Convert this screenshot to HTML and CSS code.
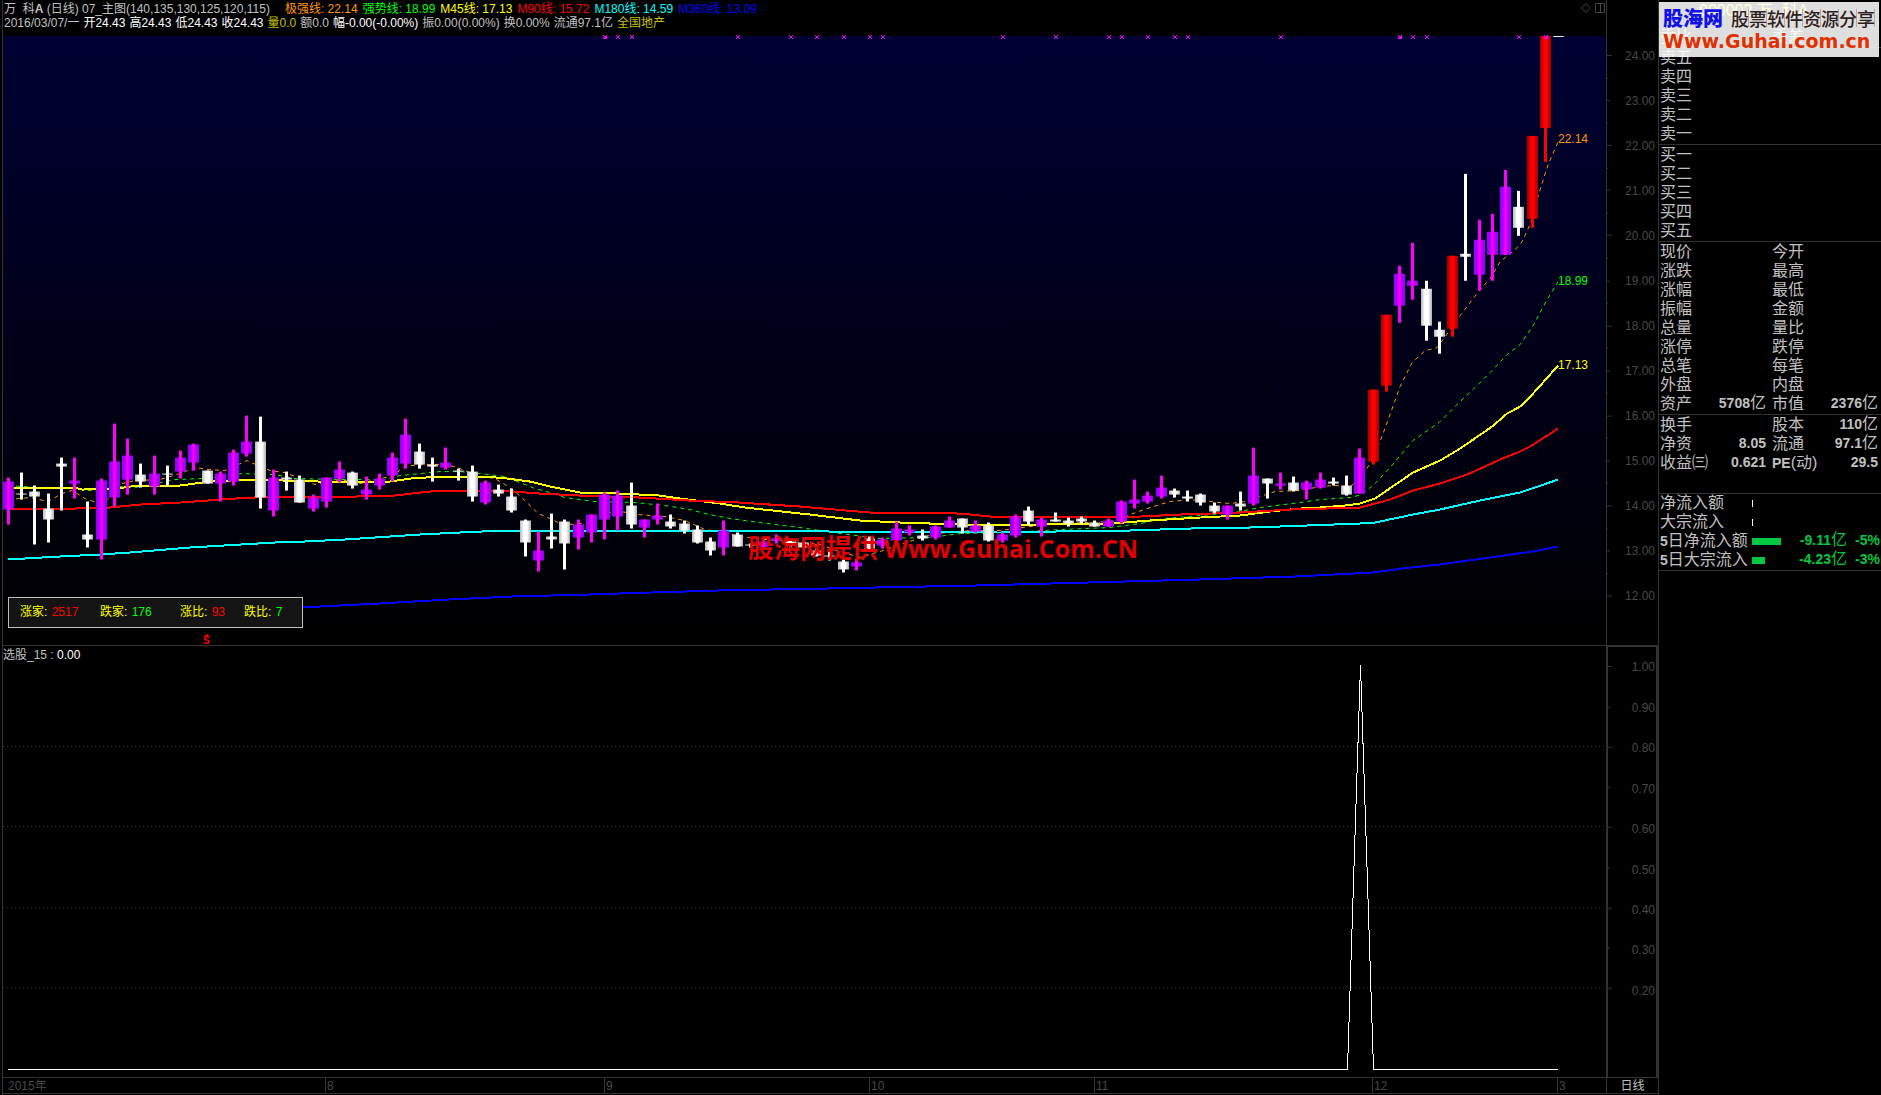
FILE: index.html
```html
<!DOCTYPE html>
<html lang="zh-CN">
<head>
<meta charset="utf-8">
<meta name="viewport" content="width=device-width, initial-scale=1">
<title>万科A 日线</title>
<link rel="stylesheet" href="styles.css">
</head>
<body>
<div class="terminal">
  <main class="charts">
    <section class="panel panel-main">
      <div class="panel-body">
        <header class="info">
          <div class="info-row">
            <span class="info-title">万&nbsp; 科<b>A</b> (日线) 07_主图(140,135,130,125,120,115)</span>
            <span class="orange">极强线: 22.14</span>
            <span class="green">强势线: 18.99</span>
            <span class="yellow">M45线: 17.13</span>
            <span class="red">M90线: 15.72</span>
            <span class="cyan">M180线: 14.59</span>
            <span class="blue">M360线: 13.09</span>
            <svg class="info-icons" width="24" height="12" viewBox="0 0 24 12" aria-hidden="true">
              <path d="M5 1.5 9.5 6 5 10.500.5 6Z"/>
              <path d="M14.500 1.500h9v9h-9zM19.500 1.500v9"/>
            </svg>
          </div>
          <div class="info-row">
            <span>2016/03/07/一</span>
            <span class="white">开24.43</span>
            <span class="white">高24.43</span>
            <span class="white">低24.43</span>
            <span class="white">收24.43</span>
            <span class="olive">量0.0</span>
            <span>额0.0</span>
            <span class="white">幅-0.00(-0.00%)</span>
            <span>振0.00(0.00%)</span>
            <span>换0.00%</span>
            <span>流通97.1亿</span>
            <span class="olive">全国地产</span>
          </div>
        </header>
        <div class="plot">
          <svg id="candles" class="drawing" viewBox="3 36 1603 610" preserveAspectRatio="none" role="img" aria-label="日线K线图">
            <defs>
              <linearGradient id="up"><stop offset="0" stop-color="#9000ff"/><stop offset=".25" stop-color="#a800ff"/><stop offset=".5" stop-color="#ff00ff"/><stop offset=".75" stop-color="#b000ff"/><stop offset="1" stop-color="#9000ff"/></linearGradient>
              <linearGradient id="down"><stop offset="0" stop-color="#b8b8b8"/><stop offset=".35" stop-color="#ffffff"/><stop offset=".65" stop-color="#ffffff"/><stop offset="1" stop-color="#b0b0b0"/></linearGradient>
              <linearGradient id="limit"><stop offset="0" stop-color="#a00000"/><stop offset=".4" stop-color="#ff0000"/><stop offset=".6" stop-color="#ff0000"/><stop offset="1" stop-color="#a00000"/></linearGradient>
            </defs>
          </svg>
          <span class="price price-1 orange">22.14</span>
          <span class="price price-2 green">18.99</span>
          <span class="price price-3 yellow">17.13</span>
          <p class="watermark">股海网提供 <span>Www.Guhai.Com.CN</span></p>
          <div class="breadth">
            <span class="yellow">涨家: <i class="red">2517</i></span>
            <span class="yellow">跌家: <i class="green">176</i></span>
            <span class="yellow">涨比: <i class="red">93</i></span>
            <span class="yellow">跌比: <i class="green">7</i></span>
          </div>
          <span class="signal red">S</span>
        </div>
      </div>
      <div class="axis axis-main">
        <svg class="ticks" viewBox="0 0 8 646" preserveAspectRatio="none" id="ticks-main" aria-hidden="true"></svg>
        <ol class="labels">
          <li>24.00</li><li>23.00</li><li>22.00</li><li>21.00</li><li>20.00</li><li>19.00</li><li>18.00</li><li>17.00</li><li>16.00</li><li>15.00</li><li>14.00</li><li>13.00</li><li>12.00</li>
        </ol>
      </div>
    </section>
    <section class="panel panel-sub">
      <div class="panel-body">
        <h2 class="sub-title">选股_15 : <span class="white">0.00</span></h2>
        <svg class="drawing" viewBox="3 647 1603 430" preserveAspectRatio="none" role="img" aria-label="选股信号">
          <path class="grid" d="M3 747.5H1606M3 827.5H1606M3 908.5H1606M3 988.5H1606"/>
          <path class="pick" d="M8 1069.5H1347.5L1360.500 666 1373.500 1069.500H1558"/>
        </svg>
      </div>
      <div class="axis axis-sub">
        <svg class="ticks" viewBox="0 0 8 430" preserveAspectRatio="none" aria-hidden="true">
          <path d="M0 19.5h4M0 60.500h2M0 100.500h4M0 140.500h2M0 180.500h4M0 221.500h2M0 261.500h4M0 301.500h2M0 341.500h4"/>
        </svg>
        <ol class="labels">
          <li>1.00</li><li>0.90</li><li>0.80</li><li>0.70</li><li>0.60</li><li>0.50</li><li>0.40</li><li>0.30</li><li>0.20</li>
        </ol>
      </div>
    </section>
    <footer class="dates">
      <ol class="months">
        <li>2015年</li><li>8</li><li>9</li><li>10</li><li>11</li><li>12</li><li>3</li>
      </ol>
      <span class="period">日线</span>
    </footer>
  </main>

  <aside class="quote">
    <div class="quote-name">000002 万&nbsp; 科A</div>
    <table class="group">
      <tr><th>委比</th><td></td><th>委差</th><td></td></tr>
    </table>
    <table class="group">
      <tr><th>卖五</th><td></td></tr>
      <tr><th>卖四</th><td></td></tr>
      <tr><th>卖三</th><td></td></tr>
      <tr><th>卖二</th><td></td></tr>
      <tr><th>卖一</th><td></td></tr>
    </table>
    <table class="group">
      <tr><th>买一</th><td></td></tr>
      <tr><th>买二</th><td></td></tr>
      <tr><th>买三</th><td></td></tr>
      <tr><th>买四</th><td></td></tr>
      <tr><th>买五</th><td></td></tr>
    </table>
    <table class="group">
      <tr><th>现价</th><td></td><th>今开</th><td></td></tr>
      <tr><th>涨跌</th><td></td><th>最高</th><td></td></tr>
      <tr><th>涨幅</th><td></td><th>最低</th><td></td></tr>
      <tr><th>振幅</th><td></td><th>金额</th><td></td></tr>
      <tr><th>总量</th><td></td><th>量比</th><td></td></tr>
      <tr><th>涨停</th><td></td><th>跌停</th><td></td></tr>
      <tr><th>总笔</th><td></td><th>每笔</th><td></td></tr>
      <tr><th>外盘</th><td></td><th>内盘</th><td></td></tr>
      <tr><th>资产</th><td>5708<i>亿</i></td><th>市值</th><td>2376<i>亿</i></td></tr>
    </table>
    <table class="group group-tall">
      <tr><th>换手</th><td></td><th>股本</th><td>110<i>亿</i></td></tr>
      <tr><th>净资</th><td>8.05</td><th>流通</th><td>97.1<i>亿</i></td></tr>
      <tr><th>收益㈢</th><td>0.621</td><th><b>PE</b>(动)</th><td>29.5</td></tr>
    </table>
    <table class="group flows">
      <tr><th>净流入额</th><td><span class="zero"></span></td><td></td><td></td></tr>
      <tr><th>大宗流入</th><td><span class="zero"></span></td><td></td><td></td></tr>
      <tr><th><b>5</b>日净流入额</th><td><span class="bar" style="width:29px"></span></td><td>-9.11<i>亿</i></td><td>-5%</td></tr>
      <tr><th><b>5</b>日大宗流入</th><td><span class="bar" style="width:13px"></span></td><td>-4.23<i>亿</i></td><td>-3%</td></tr>
    </table>
    <div class="logo">
      <div class="logo-top"><strong>股海网</strong><span>股票软件资源分享</span></div>
      <a class="logo-link" href="#">Www.Guhai.com.cn</a>
    </div>
  </aside>
</div>
<script src="chart.js"></script>
</body>
</html>
```
FILE: styles.css
```css
* { box-sizing: border-box; }

body {
  margin: 0;
  background: #000;
  color: #c0c0c0;
  font: 12px/14px "Liberation Sans", "Noto Sans CJK SC", sans-serif;
}

i { font-style: normal; }
ol { list-style: none; margin: 0; padding: 0; }

.white { color: #fff; }
.orange { color: #ff9900; }
.green { color: #00ff00; }
.yellow { color: #ffff00; }
.red { color: #ff0000; }
.cyan { color: #00ffff; }
.blue { color: #0000ff; }
.olive { color: #c0c000; }

.terminal {
  display: flex;
  min-height: 100vh;
  padding-left: 2px;
  overflow: hidden;
}

.charts {
  flex: 1;
  min-width: 0;
  display: flex;
  flex-direction: column;
  border-left: 1px solid #333;
}

.panel { display: flex; min-height: 0; }
.panel-main { flex: 646 0 0; }
.panel-sub { flex: 431 0 0; border-top: 1px solid #333; }

.panel-body {
  flex: 1;
  min-width: 0;
  position: relative;
  display: flex;
  flex-direction: column;
}

.info { height: 36px; padding: 2px 0 0 1px; white-space: nowrap; }
.info-row { display: flex; gap: 4px; height: 14px; line-height: 15px; }
.info-row:first-child { gap: 5px; }
.info-title { margin-right: 10px; }
.info-icons { margin: 0 1px 0 auto; fill: none; stroke: #444; }

.plot {
  flex: 1;
  position: relative;
  min-height: 0;
  background: linear-gradient(#000033, #000);
}

.drawing {
  position: absolute;
  inset: 0;
  width: 100%;
  height: 100%;
  fill: none;
  overflow: visible;
}

.ma { stroke-width: 2; shape-rendering: crispEdges; }
.ma-dash { stroke-width: 1; stroke-dasharray: 4 4; shape-rendering: crispEdges; }
.mark { stroke: #ff00ff; stroke-width: 1; }

.price { position: absolute; right: 18px; }
.price-1 { top: 96px; }
.price-2 { top: 238px; }
.price-3 { top: 322px; }

.watermark {
  position: absolute;
  left: 745px;
  top: 493px;
  margin: 0;
  color: #e00000;
  font: bold 26px/36px "Noto Sans CJK SC", sans-serif;
  white-space: nowrap;
}
.watermark span { font: bold 25px/36px "Open Sans", sans-serif; }

.breadth {
  position: absolute;
  left: 5px;
  bottom: 17px;
  width: 295px;
  height: 31px;
  padding: 7px 11px;
  display: grid;
  grid-template-columns: 80px 80px 64px 1fr;
  border: 1px solid #c0c0c0;
  background: #141414;
  white-space: nowrap;
}
.breadth i { padding-left: 1px; }

.signal {
  position: absolute;
  left: 200px;
  bottom: -2px;
  font-weight: bold;
  font-size: 10px;
  line-height: 12px;
}
.signal::before {
  content: "";
  position: absolute;
  left: 1px;
  top: -1px;
  border: 3px solid transparent;
  border-top: 0;
  border-bottom: 2px solid #ff0000;
}

.axis {
  position: relative;
  width: 52px;
  color: #484848;
  text-align: right;
}
.axis-main { border-left: 1px solid #333; }
.axis-sub { border: 2px solid #333; border-top-width: 1px; border-bottom: 0; }
.ticks {
  position: absolute;
  left: 0;
  top: 0;
  width: 8px;
  height: 100%;
  stroke: #333;
}
.labels {
  height: 100%;
  display: flex;
  flex-direction: column;
  justify-content: space-between;
}
.axis-main .labels { padding: 49px 3px 42px 0; }
.axis-sub .labels { padding: 13px 1px 79px 0; }

.sub-title {
  margin: 2px 0 0;
  font: inherit;
}
.grid { stroke: #333; stroke-dasharray: 1 3; shape-rendering: crispEdges; }
.pick { stroke: #fff; shape-rendering: crispEdges; }

.dates {
  display: flex;
  height: 18px;
  border-top: 1px solid #333;
  line-height: 16px;
  color: #484848;
}
.months {
  flex: 1;
  display: grid;
  grid-template-columns: 322fr 279fr 265fr 225fr 278fr 185fr 49fr;
  height: 16px;
  border-bottom: 1px solid #333;
}
.months li { padding-left: 1px; border-left: 1px solid #333; }
.months li:first-child { padding-left: 5px; border-left: 0; }
.period {
  width: 52px;
  height: 16px;
  border-left: 1px solid #333;
  border-bottom: 1px solid #333;
  text-align: center;
  color: #c0c0c0;
}

.quote {
  position: relative;
  width: 223px;
  border-left: 1px solid #333;
  font-size: 16px;
  line-height: 19px;
}
.quote-name {
  height: 28px;
  padding: 1px 0 0 40px;
  color: #ffff00;
  font-size: 16px;
  line-height: 20px;
  white-space: nowrap;
}

.group {
  width: 100%;
  table-layout: fixed;
  border-collapse: separate;
  border-spacing: 0;
  border-top: 1px solid #333;
  padding-top: 1px;
}
.quote-name + .group { padding-top: 0; border-top-width: 0; }
.group-tall { padding-bottom: 20px; }
.group th, .group td {
  height: 19px;
  padding: 0;
  line-height: 17px;
  vertical-align: top;
  white-space: nowrap;
}
.group th { width: 50px; padding-left: 1px; font-weight: normal; text-align: left; }
.group td { text-align: right; font-size: 14px; font-weight: bold; }
.group td:nth-child(2) { width: 57px; }
.group th:nth-child(3) { width: 58px; padding-left: 6px; }
.group td:last-child { padding-right: 3px; }
.group b { font-size: 14px; line-height: 1px; }
.group i { font-size: 16px; line-height: 1px; font-weight: normal; }

.flows { border-bottom: 1px solid #333; padding-top: 0; }
.flows td { color: #00c840; }
.flows th { width: 93px; }
.group.flows td:nth-child(2) { width: 30px; text-align: left; }
.group.flows td:nth-child(3) { width: 65px; }
.group.flows td:last-child { padding-right: 1px; }
.bar, .zero { display: block; height: 7px; margin-top: 6px; }
.bar { background: #00c840; }
.zero { width: 1px; background: #fff; }

.logo {
  position: absolute;
  left: 0;
  top: 2px;
  width: 220px;
  height: 55px;
  padding: 2px 4px 0;
  background: rgba(255, 255, 255, .87);
  white-space: nowrap;
}
.logo-top { display: flex; align-items: center; gap: 8px; height: 27px; }
.logo-top strong {
  color: #1010e8;
  font: 900 20px/27px "Noto Sans CJK SC", sans-serif;
}
.logo-top span {
  color: #302020;
  font: 500 18px/18px "Noto Sans CJK SC", sans-serif;
  background: repeating-linear-gradient(90deg, transparent 0 17px, #b8a8a8 17px 18px);
}
.logo-link {
  display: block;
  color: #e03000;
  font: bold 19px/20px "DejaVu Sans", sans-serif;
  text-decoration: none;
}
```
FILE: chart.js
```js
// One row per trading day: kind (m up, w down, r limit-up), high, body top, body bottom, low.
const days = `m478,482,510,525 w473,494,495,500 w486,492,497,545 w494,509,520,543 w458,464,467,511 m458,481,484,499
w502,535,540,548 m479,481,540,560 m424,462,498,507 m439,456,480,495 w464,475,482,488 m456,474,487,495
w466,474,475,487 m451,458,472,479 m444,445,463,471 w471,471,484,484 m472,474,484,502 m450,453,482,486
m416,442,454,457 w417,442,498,509 m470,478,511,517 w472,478,480,491 w476,480,503,503 m495,498,509,512
m478,478,502,508 m462,470,479,483 w472,473,486,489 m477,490,495,500 m474,479,486,490 m453,458,476,482
m419,435,464,469 w444,452,465,469 w458,465,467,482 m448,463,468,470 w469,471,472,481 w466,472,497,502
m481,483,503,505 w485,490,494,497 w489,497,511,513 w520,521,543,557 m532,551,561,572 w514,537,540,549
w520,522,544,570 m520,525,538,550 m515,515,533,543 m493,495,520,540 m491,496,517,531 w483,506,525,529
m520,520,528,538 m504,516,520,525 w515,522,527,529 w521,524,531,534 w526,530,543,544 w538,542,551,556
m521,531,548,556 w533,535,547,547 w544,545,546,548 m541,542,547,548 m535,539,541,544 w540,542,546,548
w541,543,548,549 w545,551,556,557 w552,556,557,561 w560,562,570,573 m559,563,567,571 w537,539,549,550
m538,540,546,549 m522,529,541,543 m526,530,533,536 w530,536,539,541 m526,527,538,540 m517,521,528,528
w519,519,528,534 m521,526,532,533 w523,526,541,542 m533,535,541,543 m515,517,536,538 w507,511,522,526
m518,520,527,537 w513,520,522,522 w518,521,524,527 w517,519,522,525 w521,523,527,527 m519,521,527,527
m501,502,522,524 m480,500,504,509 m492,496,502,504 m476,488,497,499 w489,491,495,498 w491,497,499,502
w494,495,503,506 w503,506,512,514 m506,506,515,520 w492,504,507,511 m448,476,504,506 w479,479,484,499
m473,484,486,490 w477,483,491,492 m481,483,490,500 m473,480,488,489 w478,482,484,486 w476,486,495,496
m449,458,494,494 r390,390,462,465 r315,315,386,392 m266,274,306,323 m243,281,286,300 w281,289,326,341
w322,330,337,354 r256,256,329,337 w174,254,257,281 m220,240,275,291 m214,232,255,281 m170,187,255,255
w191,207,228,236 r136,136,219,228 r36,36,128,162 w36,36,37,37`.split(/\s+/);

const dashed = {
  '#ff9900': '8,500 30,498 48,502 62,494 72,491 85,499 100,504 112,497 122,484 135,481 160,480 180,474 195,468 210,470 225,471 247,461 258,466 270,471 285,473 295,477 305,481 315,485 325,483 340,480 360,484 380,479 395,476 400,470 410,466 425,465 440,465 455,467 465,471 478,476 495,479 505,485 515,492 525,501 538,514 550,519 560,524 575,525 590,523 600,517 615,511 638,515 665,517 685,521 705,530 725,533 740,537 765,540 790,542 820,545 840,552 860,558 880,552 900,545 925,537 945,533 970,531 1000,531 1030,527 1060,524 1110,522 1130,515 1150,508 1170,502 1190,500 1210,502 1230,504 1245,502 1260,497 1275,492 1300,491 1320,487 1335,486 1350,487 1357,482 1365,472 1372,461 1380,442 1390,415 1400,387 1412,363 1425,351 1437,348 1448,333 1460,316 1480,290 1490,279 1500,262 1515,250 1522,242 1530,225 1540,190 1548,165 1558,142',
  '#00ff00': '8,486 40,488 70,488 88,491 105,491 120,487 135,488 155,484 175,480 200,479 225,477 240,474 275,475 295,479 345,480 385,480 400,476 440,472 460,472 480,474 505,477 520,483 535,489 550,493 565,498 595,502 635,503 665,506 690,510 705,514 730,519 760,523 800,528 840,534 880,539 930,538 960,534 1010,533 1060,530 1110,528 1140,524 1165,519 1200,516 1235,513 1260,508 1300,503 1320,500 1350,498 1362,495 1375,484 1390,468 1413,441 1439,423 1457,405 1477,386 1490,373 1507,355 1520,345 1533,326 1547,300 1558,282'
};

const averages = {
  '#ffff00': '8,488 75,488 82,490 120,489 128,487 180,486 210,482 250,480 320,482 390,482 410,479 440,477 500,478 530,482 550,487 580,493 620,494 660,496 680,499 720,504 745,508 810,515 860,521 900,523 960,525 1040,525 1110,524 1150,521 1200,518 1240,516 1270,512 1300,509 1320,508 1345,506 1360,504 1375,499 1413,473 1440,461 1460,449 1492,427 1507,414 1520,407 1533,394 1558,366',
  '#ff0000': '8,510 75,509 110,508 140,505 180,503 235,499 250,498 355,497 395,496 420,493 440,491 500,491 540,494 580,496 640,498 690,501 740,503 800,507 870,513 960,514 990,517 1140,517 1180,515 1240,513 1290,510 1360,508 1375,504 1390,500 1413,491 1440,484 1467,475 1500,460 1520,452 1530,447 1558,429',
  '#00ffff': '8,560 60,557 100,555 130,553 190,548 275,543 305,542 345,540 420,535 480,532 600,531 750,531 830,532 1000,533 1055,532 1130,531 1190,529 1250,528 1280,527 1360,524 1375,523 1413,515 1440,510 1480,501 1520,493 1535,488 1558,480',
  '#0000ff': '302,608 380,604 450,600 513,597 592,595 620,594 720,591 830,589 978,586 1090,583 1200,580 1296,577 1374,573 1402,569 1440,565 1490,558 1533,552 1558,547'
};

const marked = [45, 46, 47, 55, 59, 61, 63, 65, 66, 75, 79, 83, 84, 86, 88, 89, 96, 105, 106, 107, 114, 116];
const strong = [45, 105, 116];

const dayX = i => Math.floor(8.5 + i * 13.248) - 1;
const fills = { m: ['url(#up)', '#ff00ff'], w: ['url(#down)', '#ffffff'], r: ['url(#limit)', '#ff0000'] };

let out = '';
for (const [color, points] of Object.entries(dashed)) {
  out += `<polyline class="ma-dash" stroke="${color}" points="${points}"/>`;
}
for (const [color, points] of Object.entries(averages)) {
  out += `<polyline class="ma" stroke="${color}" points="${points}"/>`;
}
days.forEach((day, i) => {
  const [body, wick] = fills[day[0]];
  const [high, top, bottom, low] = day.slice(1).split(',').map(Number);
  const x = dayX(i);
  out += `<rect x="${x}" y="${high}" width="3" height="${low - high}" fill="${wick}"/>`;
  out += `<rect x="${x - 4}" y="${top}" width="11" height="${bottom - top}" fill="${body}"/>`;
});
for (const i of marked) {
  const x = dayX(i) + 2;
  out += `<path class="mark" d="M${x - 2} 35l4 4m0-4l-4 4"/>`;
  if (strong.includes(i)) out += `<rect x="${x - 1}" y="36" width="3" height="3" fill="#ff00ff"/>`;
}
document.getElementById('candles').insertAdjacentHTML('beforeend', out);

let ticks = '';
for (let n = 0; n < 25; n++) {
  const y = Math.round(55 + n * 22.55) + 0.5;
  ticks += `M0 ${y}h${n % 4 === 0 ? 5 : n % 2 === 0 ? 3 : 1}`;
}
document.getElementById('ticks-main').innerHTML = `<path d="${ticks}"/>`;
```
